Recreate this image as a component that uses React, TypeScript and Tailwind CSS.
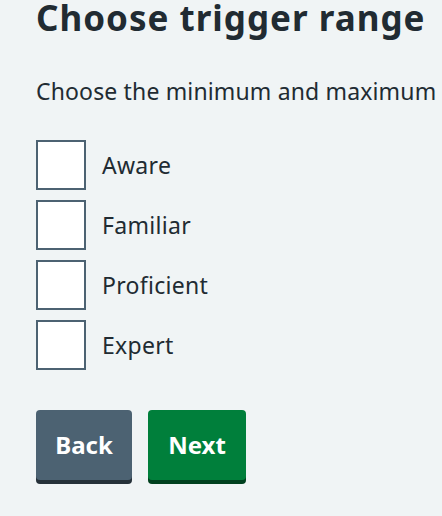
import React from "react";

const levels = ["Aware", "Familiar", "Proficient", "Expert"];

export default function App() {
  return (
    <main className="min-h-screen bg-[#f0f4f5] text-[#212b32] font-['Noto_Sans',sans-serif] overflow-hidden">
      <div className="pl-9 whitespace-nowrap">
        {/* Heading */}
        <h1 className="text-[35px] leading-[36px] font-bold tracking-[1px]">Choose trigger range</h1>

        {/* Hint */}
        <p className="mt-[39px] text-[23px] leading-[32px] tracking-[0.15px]">Choose the minimum and maximum</p>

        {/* Checkboxes */}
        <div className="mt-[33px] flex flex-col gap-[10px]">
          {levels.map((level) => (
            <label key={level} className="flex items-center gap-4">
              <span className="w-[50px] h-[50px] bg-white border-2 border-[#4c6272] shrink-0" />
              <span className="text-[23px] leading-[32px] tracking-[0.3px]">{level}</span>
            </label>
          ))}
        </div>

        {/* Actions */}
        <div className="mt-[40px] flex gap-4">
          <button className="h-[70px] w-[96px] rounded-[4px] bg-[#4c6272] shadow-[0_4px_0_#263139] text-white text-[24px] font-bold">
            Back
          </button>
          <button className="h-[70px] w-[98px] rounded-[4px] bg-[#007f3b] shadow-[0_4px_0_#00401e] text-white text-[24px] font-bold">
            Next
          </button>
        </div>
      </div>
    </main>
  );
}
